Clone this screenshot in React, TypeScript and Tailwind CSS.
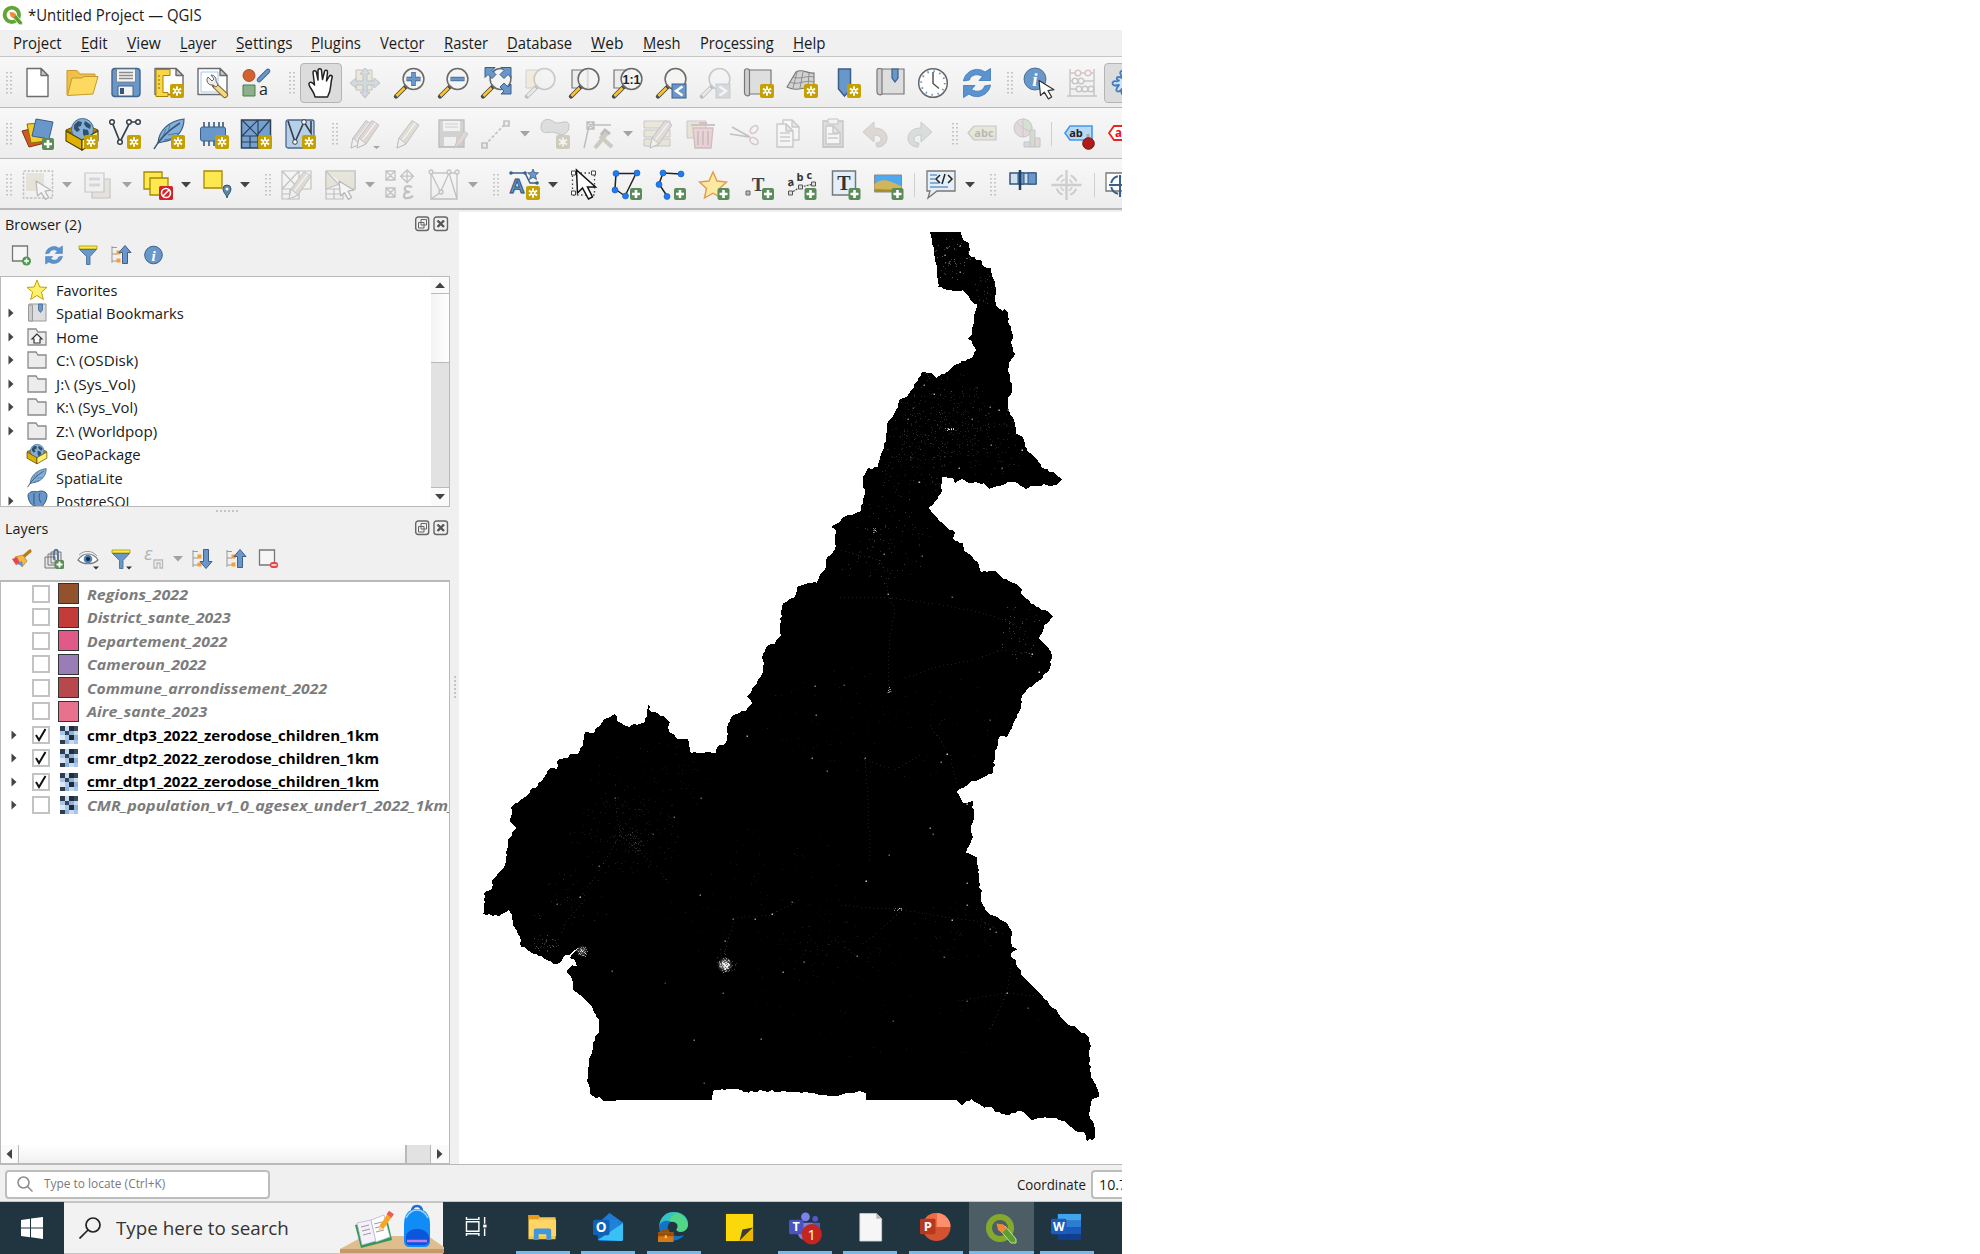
import React, { useLayoutEffect, useRef } from "react";

/* ---------- text squeezed to the metrics of the system UI font ---------- */
function Fit({ className = "", children }: { className?: string; children: React.ReactNode }) {
  const outer = useRef<HTMLSpanElement>(null);
  const inner = useRef<HTMLSpanElement>(null);
  useLayoutEffect(() => {
    const o = outer.current;
    const i = inner.current;
    if (o && i) {
      i.style.transform = "scaleX(" + o.clientWidth / i.offsetWidth + ")";
    }
  }, []);
  return (
    <span ref={outer} className={"inline-block shrink-0 whitespace-nowrap " + className}>
      <span ref={inner} className="inline-block origin-left">{children}</span>
    </span>
  );
}

/* ---------- icon primitives ---------- */
const B = "#6a97c9";
const BD = "#3a5f8a";

function Svg({ children, dim }: { children: React.ReactNode; dim?: boolean }) {
  return (
    <svg viewBox="0 0 32 32" className={"size-8 shrink-0 overflow-visible " + (dim ? "opacity-30" : "")}>
      {children}
    </svg>
  );
}
function Star({ x = 17, y = 17 }: { x?: number; y?: number }) {
  return (
    <g transform={`translate(${x} ${y})`}>
      <rect width="14" height="14" rx="2" fill="#c4a000" />
      <path d="M7 2.2V11.8M2.9 4.6L11.1 9.4M11.1 4.6L2.9 9.4" stroke="#fff" strokeWidth="1.8" />
      <circle cx="7" cy="7" r="1.1" fill="#c4a000" />
    </g>
  );
}
function Plus({ x = 19, y = 19, s = 1 }: { x?: number; y?: number; s?: number }) {
  return (
    <g transform={`translate(${x} ${y}) scale(${s})`}>
      <rect width="12" height="12" rx="2" fill="#5a8c5a" />
      <path d="M6 2V10M2 6H10" stroke="#fff" strokeWidth="2.6" />
    </g>
  );
}
function Lens({ dim }: { dim?: boolean }) {
  return (
    <g>
      <path d="M3 29.5L13 19.5" stroke="#4a4a4a" strokeWidth="4.4" strokeLinecap="round" />
      <path d="M3.4 29L11.5 21" stroke={dim ? "#ddd" : "#fcc52e"} strokeWidth="2.6" />
      <circle cx="20.5" cy="12" r="10.4" fill="#f4f4f2" fillOpacity=".88" stroke="#6a6a6a" strokeWidth="1.5" />
    </g>
  );
}
function Page({ x = 5, y = 1.5, w = 21, h = 28 }: { x?: number; y?: number; w?: number; h?: number }) {
  return (
    <g stroke="#6c6c6c" strokeWidth="1.4" strokeLinejoin="round">
      <path d={`M${x} ${y}h${w - 7}l7 7v${h - 7}h${-w}z`} fill="#fff" />
      <path d={`M${x + w - 7} ${y}v7h7z`} fill="#c9c9c9" />
    </g>
  );
}
function Arrow({ x = 0, y = 0 }: { x?: number; y?: number }) {
  return (
    <path transform={`translate(${x} ${y})`} d="M0 0L1.5 15L5.3 11.6L9.4 18.4L12.6 16.4L9 10.2L15 9.2Z" fill="#fff" stroke="#333" strokeWidth="1.2" strokeLinejoin="round" />
  );
}
function Globe() {
  return (
    <g>
      <path d="M0 12L16 5L32 12L16 21Z" fill="#b08a00" stroke="#6b5600" strokeWidth="1" />
      <circle cx="16.5" cy="11.5" r="11" fill="#86afd6" stroke="#456c96" strokeWidth="1" />
      <path d="M8 7l4-4 4 1-1 4-3 1 2 3-3 2-3-3zM19 3l6 4-1 4-4-2-2-3zM17 11l5 1 1 4-4 4-2-4z" fill="#31506e" />
      <path d="M0 13L16 22V32L0 23Z" fill="#e0b000" stroke="#4b3c00" strokeWidth="1.1" />
      <path d="M32 13L16 22V32L32 23Z" fill="#fdf266" stroke="#4b3c00" strokeWidth="1.1" />
    </g>
  );
}
function Refresh() {
  return (
    <g fill="#5a93cf" stroke="#3c76b4" strokeWidth=".8">
      <path d="M2.5 14C4 4 16-1 24 5L29.5 1.5V13.5H18L21.5 9.5C16 6 9.5 8 8.5 13Z" />
      <path d="M29.5 18C28 28 16 33 8 27L2.5 30.5V18.5H14L10.5 22.5C16 26 22.5 24 23.5 19Z" />
    </g>
  );
}
function Feather() {
  return (
    <g>
      <path d="M5 25C6 12 16 3 31 1C31 10 26 22 9 24Z" fill="#82b0dc" stroke="#3d5f80" strokeWidth="1.2" />
      <path d="M1 31C7 20 16 12 27 5" stroke="#3b5570" strokeWidth="1.5" fill="none" />
      <path d="M10 18l3-7M15 14l2-7M11 22l10-2M15 17l10-2" stroke="#4a7099" strokeWidth=".9" />
    </g>
  );
}
function Pencil({ x = 0, c = "#b6a88e" }: { x?: number; c?: string }) {
  return (
    <g transform={`translate(${x} 0)`}>
      <path d="M6 30L8 20L21 2.5L28 7L15 26Z" fill={c} stroke="#555" strokeWidth="1" />
      <path d="M6 30L8 20L15 26Z" fill="#eee" stroke="#555" strokeWidth="1" />
      <path d="M11.5 22L24.5 5" stroke="#eee" strokeWidth="1.4" />
    </g>
  );
}

const SQ = "M2 2h9v9h-9zM2 2l9 9M11 2l-9 9";
const SANS = "'Liberation Sans', sans-serif";

const icons: Record<string, React.ReactNode> = {
  blank: <Page />,
  open: (
    <g stroke="#c59a2c" strokeWidth="1">
      <path d="M1 28V3.5h10l3 3.5h15v6z" fill="#eec04a" />
      <path d="M1.5 28.5L6 11h10l2-1.5h14L27 27z" fill="#fdd95f" />
    </g>
  ),
  save: (
    <g>
      <rect x="2" y="1.5" width="28" height="28" rx="3" fill={B} stroke="#40658f" strokeWidth="1.4" />
      <path d="M6.5 2h19v13h-19z" fill="#f3f3f3" stroke="#777" strokeWidth=".8" />
      <path d="M9 5.5h14M9 8.5h14M9 11.5h14" stroke="#8b8b8b" strokeWidth="1.3" />
      <path d="M8 19h15v10H8z" fill="#f3f3f3" stroke="#40658f" />
      <path d="M10 21h4v6h-4z" fill="#34567e" />
    </g>
  ),
  layout: (
    <g>
      <Page x={2} w={28} h={26} />
      <path d="M3 2.5h14v6H10v17h5v4H3z" fill="#f8d648" stroke="#a98200" strokeWidth="1" />
      <path d="M5 9h2M5 13h2M5 17h2M5 21h2" stroke="#8a6a00" />
      <Star />
    </g>
  ),
  props: (
    <g>
      <Page x={1} w={29} h={26} />
      <path d="M4 5h17v20H4z" fill="none" stroke="#9ac1ee" strokeWidth=".9" />
      <path d="M18 18.500L28 28" stroke="#7a6a30" strokeWidth="6" strokeLinecap="round" />
      <path d="M19 19.500L28 28" stroke="#f3d985" strokeWidth="4" strokeLinecap="round" />
      <path d="M11 10a5 5 0 0 0 5 8l3 2 2-2-2-4a5 5 0 0 0-5-6l3 4-2 2z" fill="#eee" stroke="#666" strokeWidth="1" />
    </g>
  ),
  style: (
    <g>
      <circle cx="8" cy="8.500" r="6" fill="#d4622c" stroke="#8f3e1c" strokeWidth=".8" />
      <path d="M18 13L27 4" stroke="#3a6190" strokeWidth="4.600" strokeLinecap="round" />
      <path d="M18 13L27 4" stroke={B} strokeWidth="3" strokeLinecap="round" />
      <path d="M2 18h12v11H2z" fill="#8bb08b" stroke="#4d7a4d" />
      <text x="18" y="28" fontSize="16" fontFamily="Open Sans, sans-serif" fill="#222">a</text>
    </g>
  ),
  hand: (
    <path
      d="M10 30C9 24 3 19 4 16.500C5 14 8 16 9.500 18L8 5.500C8 3 11 3 11.500 5.500L13 13V3.500C13 1 16.500 1 16.500 3.500L17.500 12.500L19.500 4.500C20 2.500 23 3 22.500 5.500L21.500 14L24 9.500C25 7.500 28 8.500 27 11C25 17 27 22 22.500 30Z"
      fill="#fff" stroke="#222" strokeWidth="1.500" strokeLinejoin="round"
    />
  ),
  pansel: (
    <g stroke="#555" strokeWidth="1">
      <path d="M7 3h16v20H7z" fill="#d8cfa8" />
      <path d="M16 1l5 6h-3v7h7v-3l6 5-6 5v-3h-7v7h3l-5 6-5-6h3v-7H7v3l-6-5 6-5v3h7V7h-3z" fill="#8aa0b5" />
    </g>
  ),
  zin: <g><Lens /><path d="M20.500 5v14M13.500 12h14" stroke={BD} strokeWidth="4.400" /><path d="M20.500 5.500v13M14 12h13" stroke={B} strokeWidth="3" /></g>,
  zout: <g><Lens /><path d="M13.500 12h14" stroke={BD} strokeWidth="4.400" /><path d="M14 12h13" stroke={B} strokeWidth="3" /></g>,
  zfull: (
    <g>
      <Lens />
      <g fill={B} stroke={BD} strokeWidth="1">
        <path d="M5 .500h10l-3 3 4 4-4 4-4-4-3 3z" />
        <path d="M31 .500H21l3 3-4 4 4 4 4-4 3 3z" />
        <path d="M31 27H21l3-3-4-4 4-4 4 4 3-3z" />
      </g>
    </g>
  ),
  zsel: <g><path d="M2 3h15v18H2z" fill="#ead9a0" stroke="#888" /><Lens dim /></g>,
  zlayer: <g><path d="M4 3h15v18H4z" fill="#ececec" stroke="#777" strokeWidth="1.200" /><Lens /><path d="M20 3v18" stroke="#ccc" /></g>,
  z11: (
    <g>
      <path d="M3 3h15v18H3z" fill="#ececec" stroke="#777" strokeWidth="1.200" /><Lens />
      <text x="20.500" y="16.500" textAnchor="middle" fontSize="12.500" fontWeight="bold" fontFamily={SANS} fill="#222">1:1</text>
    </g>
  ),
  zlast: <g><Lens /><rect x="17" y="17" width="14" height="14" fill={B} stroke={BD} /><path d="M27.500 19.500L21 24l6.500 4.500" stroke="#fff" strokeWidth="2.400" fill="none" /></g>,
  znext: <g><Lens dim /><rect x="17" y="17" width="14" height="14" fill="#8fa3b5" stroke="#777" /><path d="M20.500 19.500L27 24l-6.500 4.500" stroke="#fff" strokeWidth="2.400" fill="none" /></g>,
  newmap: (
    <g stroke="#777" strokeWidth="1.200">
      <path d="M4 3h25v24H4z" fill="#dedede" /><path d="M2.500 4c0-3 5-3 5 0v24c-2 2-5 0-5-2z" fill="#cfcfcf" /><g stroke="none"><Star x={18} /></g>
    </g>
  ),
  map3d: (
    <g>
      <path d="M1 20L10 5c6-4 12 2 18 1v15c-9-3-15 5-27-1z" fill="#d2d2d2" stroke="#777" strokeWidth="1.100" />
      <path d="M4 15c8 4 15-3 24 0M7 10c8 3 13-2 21 0M11 5l-4 16M17 5l-3 16M23 6l-1 14" stroke="#888" fill="none" strokeWidth=".9" />
      <Star x={18} />
    </g>
  ),
  newbm: <g><path d="M8.500 2h12v20l-6 7-6-7z" fill={B} stroke={BD} strokeWidth="1.500" /><Star x={17} /></g>,
  bm: (
    <g stroke="#777" strokeWidth="1.200">
      <path d="M4 2h26v25H4z" fill="#dedede" /><path d="M3 3c0-2 5-2 5 0v24c-2 2-5 0-5-2z" fill="#cfcfcf" />
      <path d="M18 2h6v9l-3 4-3-4z" fill={B} stroke={BD} />
    </g>
  ),
  clock: (
    <g>
      <circle cx="16" cy="16" r="14.300" fill="#fff" stroke="#666" strokeWidth="1.500" />
      <circle cx="16" cy="16" r="11.800" fill="none" stroke={B} strokeWidth="2" strokeDasharray="1.500 4.680" />
      <path d="M16 5v11.500l6 5" stroke="#555" strokeWidth="1.500" fill="none" />
    </g>
  ),
  refresh: <Refresh />,
  info: (
    <g>
      <circle cx="12" cy="12" r="11" fill={B} stroke={BD} strokeWidth=".8" />
      <text x="12" y="19" textAnchor="middle" fontSize="19" fontWeight="bold" fontStyle="italic" fontFamily="Liberation Serif, serif" fill="#fff">i</text>
      <Arrow x={16} y={13.500} />
    </g>
  ),
  abacus: (
    <g fill="none" stroke="#666" strokeWidth="1.500">
      <path d="M4 2v27M28 2v27M1 29h30M4 6h24M4 14h24M4 22h24" />
      <g fill="#fff"><circle cx="12" cy="6" r="2.800" stroke="#a55" /><circle cx="22" cy="6" r="2.800" stroke="#a55" /><circle cx="9" cy="14" r="2.800" /><circle cx="15" cy="14" r="2.800" /><circle cx="13" cy="22" r="2.800" /><circle cx="19" cy="22" r="2.800" /><circle cx="25" cy="22" r="2.800" /></g>
    </g>
  ),
  gear: (
    <path
      d="M15 5C12 2 9 5 11 8L12 11L9 10C6 10 6 13 9 13.500L7 14.500C2 13 1 18 5 18.500L9 18L7 21C5 24 8 26 11 23L12 22C10 26 13 30 16 27L18 24V6z"
      transform="translate(1 0)" fill="#cfe2f7" stroke="#3f7cc4" strokeWidth="1.800" strokeLinejoin="round"
    />
  ),
  addlayer: (
    <g strokeWidth="1">
      <path d="M0 13L17 9l6 16L7 29z" fill="#cf5a28" stroke="#7d3210" />
      <path d="M5 6l17-1 2 18-15 2z" fill="#f4ce28" stroke="#8b6d00" />
      <path d="M14 1l17 3-4 17-17-3z" fill={B} stroke={BD} />
      <Plus x={20} y={20} />
    </g>
  ),
  gpkg: <g><Globe /><Star x={18} /></g>,
  vshape: (
    <g>
      <path d="M3 4L11 24L21 4H29" fill="none" stroke="#333f4b" strokeWidth="1.700" />
      <g fill="#fff" stroke="#333f4b" strokeWidth="1.500"><circle cx="3" cy="4" r="2.300" /><circle cx="11" cy="24" r="2.300" /><circle cx="20" cy="4" r="2.300" /><circle cx="29" cy="4" r="2.300" /></g>
      <Star x={18} />
    </g>
  ),
  feather: <g><Feather /><Star x={18} /></g>,
  chip: (
    <g>
      <path d="M7 4v24M12 4v24M17 4v24M22 4v24M26 4v12" stroke="#48698d" strokeWidth="1.800" />
      <rect x="3.500" y="9" width="25" height="14" rx="2" fill={B} stroke={BD} /><Star x={18} />
    </g>
  ),
  mesh: (
    <g>
      <path d="M1.500 2h29v28h-29z" fill="#74a0cf" stroke="#2c4058" strokeWidth="1.500" />
      <path d="M1.500 18h29M18 2v28M2 2l16 16M18 2L2 18M30 2L18 16M10 18v12M2 24h16" stroke="#2c4058" strokeWidth="1.200" /><Star x={18} />
    </g>
  ),
  gps: (
    <g>
      <rect x="2" y="2" width="28" height="28" rx="2" fill="#b8cfe8" stroke="#47688e" strokeWidth="1.300" />
      <path d="M4 3L11 24L20 4L27 15V3" fill="none" stroke="#333f4b" strokeWidth="1.600" />
      <circle cx="11" cy="24" r="2.300" fill="#fff" stroke="#333f4b" /><circle cx="20" cy="4" r="2.300" fill="#fff" stroke="#333f4b" /><Star x={18} />
    </g>
  ),
  pencils: <g><Pencil x={-4} c="#b4948e" /><Pencil x={2} c="#b4948e" /><path d="M24 28h7l-3.500 3z" fill="#000" /></g>,
  pencil: <Pencil x={-1} />,
  savedit: (
    <g>
      <path d="M3 2h25v27H3z" fill="#888" stroke="#444" strokeWidth="1.300" /><path d="M7 3h17v10H7z" fill="#eee" /><path d="M9 6h13M9 9h13" stroke="#777" />
      <path d="M8 19h12v9H8z" fill="#eee" /><path d="M18 30l3-7 7-10 4 3-7 10z" fill="#b9998f" stroke="#666" />
    </g>
  ),
  line: <g stroke="#555" strokeWidth="1.700" fill="none"><path d="M5 27L26 5" strokeDasharray="3 2" /><path d="M2 25h5v5H2zM24 3h5v5h-5z" fill="#ddd" /></g>,
  blob: <g><path d="M2 9C2 0 11 0 15 4S30-1 30 8s-8 10-13 7-15 4-15-6z" fill="#a9b0ac" stroke="#555" /><rect x="17" y="17" width="14" height="14" rx="2" fill="#857840" /><path d="M24 19.500v9M20 21.500l8 5M28 21.500l-8 5" stroke="#fff" strokeWidth="1.700" /></g>,
  vertex: <g stroke="#444" strokeWidth="1.400" fill="none"><path d="M1 30L6 8M9 7h19" /><path d="M4 4h7v7H4zM4 4l7 7M11 4l-7 7" /><path d="M12 30L25 14M17 18L29 29" strokeWidth="4" stroke="#7c7458" /><path d="M18 17l4-5 5 4" strokeWidth="3" /></g>,
  attrs: <g><path d="M2 3h26v7H2zM2 12h26v7H2zM2 21h26v7H2z" fill="#d0cba0" stroke="#666" /><Pencil x={2} c="#b4a49a" /></g>,
  trash: <g><path d="M1 3h19v17H1z" fill="#c9c098" stroke="#666" /><path d="M7 10h20l-2 20H9z" fill="#cf8e94" stroke="#8c4a52" strokeWidth="1.400" /><path d="M5 7h24M12 13v14M17 13v14M22 13v14M13 5h8" stroke="#8c4a52" strokeWidth="2" /></g>,
  scissors: <g fill="none" stroke="#555" strokeWidth="1.600"><path d="M1 16l19 3M3 9l18 10" /><ellipse cx="25" cy="11.500" rx="4.500" ry="3" transform="rotate(-45 25 11.500)" stroke="#a06868" /><ellipse cx="25" cy="23" rx="4.500" ry="3" transform="rotate(35 25 23)" stroke="#a06868" /></g>,
  copy: <g transform="translate(-1 0)"><Page x={11} y={2} w={16} h={20} /><Page x={5} y={6} w={16} h={23} /><path d="M8 15h10M8 19h10M8 23h10" stroke="#777" strokeWidth="1.500" /></g>,
  paste: <g><path d="M6 3h20v26H6z" fill="#b9ae9c" stroke="#555" strokeWidth="1.300" /><path d="M11 1h10v5H11z" fill="#eee" stroke="#555" /><Page x={9} y={8} w={14} h={18} /><path d="M11 16h10M11 20h10" stroke="#777" strokeWidth="1.500" /></g>,
  undo: <path d="M3 14L14 4v6c9 0 13 5 13 10s-4 9-10 9l-1-4c7 0 7-8-2-8v7z" fill="#b49a90" stroke="#776" strokeWidth="1" />,
  redo: <path d="M28 14L17 4v6C8 10 4 15 4 20s4 9 10 9l1-4c-7 0-7-8 2-8v7z" fill="#a0b0a4" stroke="#677" strokeWidth="1" />,
  abc: <g><path d="M2 15l6-7h22v14H8z" fill="#c9c9a0" stroke="#666" strokeWidth="1.200" /><text x="18" y="19" textAnchor="middle" fontSize="11" fontWeight="bold" fontFamily="Open Sans, sans-serif" fill="#333">abc</text></g>,
  diag: <g stroke="#666" strokeWidth="1" transform="translate(2 0)"><circle cx="12" cy="10" r="9" fill="#b9a0a0" /><path d="M12 10V1a9 9 0 0 1 8 13z" fill="#90b090" /><path d="M12 10L5 4M12 10v9" /><path d="M19 12h5v17h-5z" fill="#8ab08a" /><path d="M24 20h5v9h-5z" fill="#c0a0a0" /><path d="M13 24h6v5h-6z" fill="#a0a0c0" /></g>,
  abpin: (
    <g>
      <path d="M3 15l5-7h22v14H8z" fill="#b9d9f8" stroke="#4796ea" strokeWidth="1.600" />
      <text x="14" y="19" textAnchor="middle" fontSize="11" fontWeight="bold" fontFamily="Open Sans, sans-serif" fill="#222">ab</text>
      <path d="M26 24v-8" stroke="#aaa" strokeWidth="3" /><circle cx="26.500" cy="25.500" r="5.800" fill="#b01c1c" stroke="#7c0e0e" />
    </g>
  ),
  abred: (
    <g transform="translate(1 0)">
      <path d="M2 15l5-7h24v14H7z" fill="#fff" stroke="#ee2222" strokeWidth="1.800" />
      <text x="15" y="19" textAnchor="middle" fontSize="11.500" fontWeight="bold" fontFamily="Open Sans, sans-serif" fill="#e11">ab</text>
    </g>
  ),
  select: <g><path d="M1.500 2h29v27h-29z" fill="none" stroke="#555" strokeWidth="1.500" strokeDasharray="2.500 1.500" /><path d="M4 4h18v18H4z" fill="#c8bfa0" /><Arrow x={14} y={12} /></g>,
  forms: <g stroke="#666" strokeWidth="1.200"><path d="M11 10h18v19H11z" fill="#c9c4a8" /><path d="M4 4h19v19H4z" fill="#eee" /><path d="M8 10h11M8 16h11" strokeWidth="3" stroke="#999" /></g>,
  desel: (
    <g transform="translate(2 0)">
      <path d="M2 3h18v17H2z" fill="#fce94f" stroke="#a58800" strokeWidth="1.300" /><path d="M8 9h18v17H8z" fill="#fce94f" stroke="#a58800" strokeWidth="1.300" />
      <rect x="17" y="17" width="14" height="14" rx="1.500" fill="#d3232a" /><circle cx="24" cy="24" r="4.500" fill="none" stroke="#fff" strokeWidth="1.600" /><path d="M21 27l6-6" stroke="#fff" strokeWidth="1.600" />
    </g>
  ),
  selloc: (
    <g transform="translate(1 0)">
      <path d="M3 2h18v17H3z" fill="#fce94f" stroke="#a58800" strokeWidth="1.300" />
      <path d="M26 29c0-3-4-5-4-9a4 4 0 0 1 8 0c0 4-4 6-4 9z" fill="#5a86a8" stroke="#34566f" /><circle cx="26" cy="20" r="1.500" fill="#fff" />
    </g>
  ),
  editgrid: <g stroke="#555" strokeWidth="1.200" fill="none"><path d="M1 2h29v18H18v10H1zM1 20h17M1 2l17 18M18 2L1 20M18 2v18M9 20v10M1 25h17" /><Pencil x={2} c="#b4a090" /></g>,
  selgrid: <g stroke="#555" strokeWidth="1.200" fill="none"><path d="M1 2h29v18H18v10H1zM1 20h17M9 20v10M1 25h17" /><path d="M1 2h29v18H18L1 2M1 2v18l16-6" fill="#c9c4a0" /><Arrow x={14} y={12} /></g>,
  gridc: <g stroke="#555" strokeWidth="1.300" fill="none"><path d={SQ} /><path d={SQ} transform="translate(0 17)" /><path d={SQ} transform="translate(23 -2) rotate(45)" /><path d="M28 18c-6-2-8 0-7 3 1 2 3 2 5 2-3 0-6 0-6 4 0 3 5 3 9 0" strokeWidth="2.200" /></g>,
  gridv: <g stroke="#555" strokeWidth="1.300" fill="none"><path d="M3 4h26v26H3zM3 4l10 20M21 4l-8 18M21 4l8 26M13 23L3 30" /><g fill="#ddd"><circle cx="3" cy="3" r="2" /><circle cx="21" cy="3" r="2" /><circle cx="29" cy="3" r="2" /><circle cx="13" cy="23" r="2" /></g></g>,
  anno: (
    <g>
      <path d="M4 4h14l5 10h7" stroke={BD} strokeWidth="1.500" fill="none" /><circle cx="4" cy="4" r="1.800" fill={BD} /><circle cx="18" cy="4" r="1.800" fill={BD} /><circle cx="30" cy="14" r="1.800" fill={BD} />
      <text x="10" y="24" textAnchor="middle" fontSize="21" fontWeight="bold" fontFamily={SANS} fill={B} stroke="#2e5077" strokeWidth="1">A</text>
      <path d="M26 0l1.500 3.500 4 .300-3 2.700 1 4-3.500-2.200-3.500 2.200 1-4-3-2.700 4-.300z" fill={B} stroke="#2e5077" strokeWidth=".7" /><Star x={19} y={17} />
    </g>
  ),
  annosel: (
    <g transform="translate(2.500 0)">
      <path d="M4 4h22v22H4z" fill="none" stroke="#444" strokeWidth="1.300" strokeDasharray="1.500 2.500" />
      <path d="M3 2h4v4H3zM23 2h4v4h-4zM3 22h4v4H3z" fill="#fff" stroke="#444" />
      <path d="M8 1L9 24l5-5 6 11 4-2-5-10h8z" fill="#fff" stroke="#111" strokeWidth="1.500" />
    </g>
  ),
  apoly: <g><path d="M6 4.500h20L15 27 5 20z" fill="none" stroke="#222" strokeWidth="1.500" /><g fill="#1f7cf5" stroke="#1455b0" strokeWidth=".6"><circle cx="6" cy="4.500" r="3" /><circle cx="27" cy="4" r="3" /><circle cx="5" cy="21" r="3" /><circle cx="15.500" cy="27" r="3" /></g><Plus x={20} y={19} /></g>,
  aline: <g><path d="M27 5L9 4L5 15l8 12" fill="none" stroke="#222" strokeWidth="1.500" /><g fill="#1f7cf5" stroke="#1455b0" strokeWidth=".6"><circle cx="9" cy="4" r="3" /><circle cx="27" cy="5" r="3" /><circle cx="5" cy="15.500" r="3" /><circle cx="13" cy="27.500" r="3" /></g><Plus x={20} y={19} /></g>,
  astar: <g transform="translate(1.500 0)"><path d="M14.500 3l4 9 9.500 1-7 6.500 2 9.500-8.500-4.800L6 29l2-9.500L1 13l9.500-1z" fill="#fdeaa2" stroke="#e39a48" strokeWidth="1.400" /><Plus x={19} y={19} /></g>,
  atext: <g transform="translate(2 0)"><text x="15" y="22" textAnchor="middle" fontSize="19" fontWeight="bold" fontFamily="Liberation Serif, serif" fill="#444">T</text><path d="M3 22h4v4H3z" fill="#bbb" stroke="#666" /><Plus x={19} y={19} /></g>,
  acurve: (
    <g transform="translate(1.500 0)">
      <path d="M4 24L14 18L27 15" stroke="#555" strokeWidth="1.200" strokeDasharray="2 1" fill="none" /><path d="M2 22h4v4H2zM12 16h4v4h-4zM25 13h4v4h-4z" fill="#ddd" stroke="#555" />
      <g fontSize="11" fontWeight="bold" fontFamily="Open Sans, sans-serif" fill="#333"><text x="1" y="17" transform="rotate(-10 4 14)">a</text><text x="10" y="12">b</text><text x="20" y="10">c</text></g>
      <Plus x={18} y={19} />
    </g>
  ),
  abox: <g transform="translate(1.500 0)"><path d="M3 2h23v24H3z" fill="#e3eef8" stroke="#777" strokeWidth="1.500" /><text x="14.500" y="21" textAnchor="middle" fontSize="20" fontWeight="bold" fontFamily="Liberation Serif, serif" fill="#333">T</text><Plus x={19} y={19} /></g>,
  apic: <g transform="translate(1.500 0)"><path d="M1 6h27v17H1z" fill="#4fa9ee" stroke="#888" /><path d="M1 15c9-7 14-3 27 2v6H1z" fill="#d2b45a" /><path d="M1 20l27 1v2H1z" fill="#a58e2d" /><Plus x={18} y={19} /></g>,
  code: <g transform="translate(-1 0)"><path d="M3 2h28v20H13L4 29l2-7H3z" fill="#e5eff8" stroke="#777" strokeWidth="1.300" /><path d="M6 6h7M6 10h5M6 14h9M6 18h18" stroke={B} strokeWidth="1.700" /><path d="M16 6l-4 4 4 4M24 6l4 4-4 4M21 5l-3 10" stroke="#222" strokeWidth="1.500" fill="none" /></g>,
  ruler: <g><path d="M2 4h26v11H2z" fill="#cfe0f0" stroke="#34577f" strokeWidth="1.500" /><path d="M10 4h6v11h-6zM20 4h8v11h-8z" fill={B} stroke="#34577f" /><path d="M12 1v20" stroke="#23405f" strokeWidth="2.500" /></g>,
  cross: <g stroke="#7c7c7c" fill="none" strokeWidth="2" transform="translate(-1.500 0)"><path d="M16 1v30M1 16h30" strokeWidth="2.400" /><circle cx="16" cy="16" r="10.500" strokeDasharray="8.500 8" strokeDashoffset="-4" /><circle cx="16" cy="16" r="6" strokeWidth="1.500" strokeDasharray="4.700 4.700" strokeDashoffset="-2.300" /></g>,
  crossmap: <g fill="none"><path d="M2 4h28v18H2z" fill="#fff" stroke="#777" strokeWidth="1.300" /><path d="M16 6v22M5 16h26" stroke={BD} strokeWidth="2" /><circle cx="16" cy="16" r="9" stroke={BD} strokeWidth="2" strokeDasharray="10 4" strokeDashoffset="-2" /></g>,
};

/* ---------- toolbars ---------- */
function Slots({ names, dim }: { names: string[]; dim?: boolean }) {
  return (
    <>
      {names.map((n) => (
        <div key={n} className="flex w-[43.7px] shrink-0 justify-center">
          <Svg dim={dim}>{icons[n]}</Svg>
        </div>
      ))}
    </>
  );
}
function Drop({ dim }: { dim?: boolean }) {
  return (
    <div className="flex w-[15.6px] shrink-0 justify-center">
      <svg viewBox="0 0 10 6" className={"h-1.5 w-2.5 " + (dim ? "opacity-45" : "")}><path d="M0 0h10L5 5.500z" fill="#444" /></svg>
    </div>
  );
}
function Grip({ className }: { className: string }) {
  return (
    <div className={"flex shrink-0 " + className}>
      <svg viewBox="0 0 6 24" className="h-6 w-1.5">
        <path d="M1 1V24M5 1V24" stroke="#b5b5b5" strokeWidth="1.500" strokeDasharray="1.500 2.500" />
      </svg>
    </div>
  );
}
function Sep({ className }: { className: string }) {
  return <div className={"h-6 w-px shrink-0 bg-[#cfcfcf] " + className} />;
}

function Toolbars() {
  return (
    <>
      <div className="flex h-[51px] w-full shrink-0 items-center overflow-hidden border-b border-[#b8b8b8] bg-linear-to-b from-[#f8f8f8] to-[#ededed] pt-0.5">
        <Grip className="w-[16.500px] pl-1.5" />
        <Slots names={["blank", "open", "save", "layout", "props", "style"]} />
        <Grip className="w-[22.800px] pl-2.5" />
        <div className="-ml-px mr-px flex h-10 w-[42px] shrink-0 items-center justify-center rounded border border-[#b4b4b4] bg-[#dcdcdc]"><Svg>{icons.hand}</Svg></div>
        <Slots names={["pansel"]} dim />
        <Slots names={["zin", "zout", "zfull"]} />
        <Slots names={["zsel"]} dim />
        <Slots names={["zlayer", "z11", "zlast"]} />
        <Slots names={["znext"]} dim />
        <Slots names={["newmap", "map3d", "newbm", "bm", "clock", "refresh"]} />
        <Grip className="w-[18px] pl-2" />
        <Slots names={["info"]} />
        <Slots names={["abacus"]} dim />
        <div className="flex h-10 w-[42px] shrink-0 items-center justify-center rounded border border-[#b4b4b4] bg-[#dcdcdc]"><Svg>{icons.gear}</Svg></div>
      </div>
      <div className="flex h-[51px] w-full shrink-0 items-center overflow-hidden border-b border-[#b8b8b8] bg-linear-to-b from-[#f8f8f8] to-[#ededed] pt-0.5">
        <Grip className="w-4 pl-1.5" />
        <Slots names={["addlayer", "gpkg", "vshape", "feather", "chip", "mesh", "gps"]} />
        <Grip className="w-[21px] pl-2.5" />
        <Slots names={["pencils", "pencil", "savedit", "line"]} dim />
        <Drop dim />
        <Slots names={["blob", "vertex"]} dim />
        <Drop dim />
        <Slots names={["attrs", "trash", "scissors", "copy", "paste", "undo", "redo"]} dim />
        <Grip className="w-[18px] pl-2.5" />
        <Slots names={["abc", "diag"]} dim />
        <Sep className="ml-1 mr-1" />
        <Slots names={["abpin", "abred"]} />
      </div>
      <div className="flex h-[51px] w-full shrink-0 items-center overflow-hidden border-b-2 border-[#b8b8b8] bg-linear-to-b from-[#f8f8f8] to-[#ededed] pt-[3px]">
        <Grip className="w-4 pl-1.5" />
        <Slots names={["select"]} dim /><Drop dim />
        <Slots names={["forms"]} dim /><Drop dim />
        <Slots names={["desel"]} /><Drop />
        <Slots names={["selloc"]} /><Drop />
        <Grip className="w-[22px] pl-3" />
        <Slots names={["editgrid", "selgrid"]} dim /><Drop dim />
        <Slots names={["gridc", "gridv"]} dim /><Drop dim />
        <Grip className="w-[20px] pl-3" />
        <Slots names={["anno"]} /><Drop />
        <Slots names={["annosel", "apoly", "aline", "astar", "atext", "acurve", "abox", "apic"]} />
        <Sep className="ml-1 mr-1" />
        <Slots names={["code"]} /><Drop />
        <Grip className="w-6 pl-3" />
        <Slots names={["ruler"]} />
        <Slots names={["cross"]} dim />
        <Sep className="mx-1" />
        <Slots names={["crossmap"]} />
      </div>
    </>
  );
}

/* ---------- docks ---------- */
function DockTitle({ title, className }: { title: string; className: string }) {
  return (
    <div className="flex h-[30px] shrink-0 items-center pb-0.5 pl-[5px] text-[15px]">
      <Fit className={className}>{title}</Fit>
      <svg viewBox="0 0 34 16" className="ml-auto mr-px h-4 w-[34px]" fill="none" stroke="#666">
        <rect x=".7" y="1" width="13" height="13.500" rx="2.500" strokeWidth="1.400" />
        <path d="M6 3.500h5.500V9H6zM3.500 6.500H9V12H3.500z" fill="#f0f0f0" />
        <rect x="19" y="1" width="13.500" height="13.500" rx="2.500" strokeWidth="1.400" />
        <path d="M22.500 4.500l6.500 6.500M29 4.500l-6.500 6.500" strokeWidth="2.400" stroke="#555" />
      </svg>
    </div>
  );
}
function Mini({ children, className = "" }: { children: React.ReactNode; className?: string }) {
  return <svg viewBox="0 0 20 20" className={"size-5 shrink-0 overflow-visible " + className}>{children}</svg>;
}
const Funnel = <g><path d="M1 1h18v3H1z" fill="#fce94f" stroke="#a59500" strokeWidth=".8" /><path d="M1.500 4.500h17l-6.500 7v8h-3.500v-8z" fill={B} stroke="#4a6f99" strokeWidth=".9" /></g>;
const Tree = <g><path d="M1 1v17M1 2.500h5M1 9h5M1 16h5" stroke="#999" fill="none" /><path d="M5.500 5.500h4v4h-4zM5.500 13.500h4v4h-4z" fill="#ff9c2e" /></g>;
const UpArrow = <path d="M14 .500l6 7h-3.500v11h-5v-11H8z" fill={B} stroke="#3d5f8a" />;
const DownArrow = <path d="M14 19.500l6-7h-3.500v-12h-5v12H8z" fill={B} stroke="#3d5f8a" />;
const Folder = <path d="M1 2h8l2 3h8v13H1z" fill="#ececec" stroke="#8a8a8a" strokeWidth="1.300" />;

const treeIcons: Record<string, React.ReactNode> = {
  star: <path d="M10 0l2.800 7 7.200.400-5.600 4.700 2 7.400-6.400-4-6.400 4 2-7.400L0 7.400 7.200 7z" fill="#fdf06a" stroke="#c9a000" strokeWidth="1" />,
  book: <g><path d="M2 1h17v17H2z" fill="#dedede" stroke="#999" /><path d="M1.500 2h4v16h-4z" fill="#ccc" stroke="#999" /><path d="M11.500 1h4v6l-2 2.500-2-2.500z" fill={B} stroke={BD} strokeWidth=".7" /></g>,
  home: <g>{Folder}<path d="M10 7l-5 5h2v4h6v-4h2z" fill="#fff" stroke="#333" strokeWidth="1.200" /></g>,
  folder: Folder,
  gpkg: <g transform="scale(.62)"><Globe /></g>,
  feather: <g transform="scale(.62)"><Feather /></g>,
  pg: <g><path d="M1 4C2 0 8 0 10 1C14-1 20 0 20 5C20 10 16 14 15 16H12V20H8V14C5 16 1 10 1 4Z" fill={B} stroke="#33597f" /><path d="M7 2v11M13 2c-2 4 0 8 1 10" stroke="#33597f" fill="none" /></g>,
};
const tree = [
  { t: "Favorites", i: "star", w: "w-[61px]", leaf: true },
  { t: "Spatial Bookmarks", i: "book", w: "w-[128px]" },
  { t: "Home", i: "home", w: "w-[42px]" },
  { t: "C:\\ (OSDisk)", i: "folder", w: "w-[82px]" },
  { t: "J:\\ (Sys_Vol)", i: "folder", w: "w-[79px]" },
  { t: "K:\\ (Sys_Vol)", i: "folder", w: "w-[82px]" },
  { t: "Z:\\ (Worldpop)", i: "folder", w: "w-[101px]" },
  { t: "GeoPackage", i: "gpkg", w: "w-[85px]", leaf: true },
  { t: "SpatiaLite", i: "feather", w: "w-[67px]", leaf: true },
  { t: "PostgreSQL", i: "pg", w: "w-[77px]" },
];
function Expander({ hidden }: { hidden?: boolean }) {
  return <svg viewBox="0 0 6 10" className={"h-2.5 w-1.5 shrink-0 " + (hidden ? "invisible" : "")}><path d="M.500 .500L5.500 5L.500 9.500z" fill="#444" /></svg>;
}
function Tri({ d }: { d: string }) {
  return <svg viewBox="0 0 10 10" className="size-2.5"><path d={d} fill="#444" /></svg>;
}

const layers = [
  { t: "Regions_2022", w: "w-[101px]", c: "bg-[#91522d]" },
  { t: "District_sante_2023", w: "w-[144px]", c: "bg-[#c43c39]" },
  { t: "Departement_2022", w: "w-[140px]", c: "bg-[#e15989]" },
  { t: "Cameroun_2022", w: "w-[119px]", c: "bg-[#987db7]" },
  { t: "Commune_arrondissement_2022", w: "w-[240px]", c: "bg-[#b7484b]" },
  { t: "Aire_sante_2023", w: "w-[120px]", c: "bg-[#e8718d]" },
  { t: "cmr_dtp3_2022_zerodose_children_1km", w: "w-[292px]", on: true },
  { t: "cmr_dtp2_2022_zerodose_children_1km", w: "w-[292px]", on: true },
  { t: "cmr_dtp1_2022_zerodose_children_1km", w: "w-[292px] border-b-[1.500px] border-black leading-[18px]", on: true },
  { t: "CMR_population_v1_0_agesex_under1_2022_1km_", w: "w-[367px]" },
];
const rasterCells = ["#2c3e50", "#c9daea", "#1f2d3d", "#35485c", "#a9c6e6", "#33475e", "#8fb2d8", "#c9daea", "#dbe7f3", "#a9c6e6", "#1c2a3a", "#8fb2d8", "#2c3e50", "#8fb2d8", "#c9daea", "#a9c6e6"];

function LeftDock() {
  return (
    <div className="flex w-[450px] shrink-0 flex-col">
      <DockTitle title="Browser (2)" className="w-[77px]" />
      <div className="flex h-9 shrink-0 items-center gap-[13.300px] pb-1.5 pl-[11px]">
        <Mini><path d="M1.500 1h15v15h-15z" fill="#f6f6f6" stroke="#777" strokeWidth="1.300" /><circle cx="15.500" cy="16" r="4.500" fill="#4e9a4e" /><path d="M15.500 13.500v5M13 16h5" stroke="#fff" strokeWidth="1.500" /></Mini>
        <Mini><g transform="scale(.625)"><Refresh /></g></Mini>
        <Mini>{Funnel}</Mini>
        <Mini>{Tree}{UpArrow}</Mini>
        <Mini><circle cx="9.500" cy="10" r="8.800" fill={B} stroke={BD} /><text x="9.500" y="15.500" textAnchor="middle" fontSize="15" fontWeight="bold" fontStyle="italic" fontFamily="Liberation Serif, serif" fill="#fff">i</text></Mini>
      </div>
      <div className="flex h-[231px] shrink-0 overflow-hidden border border-[#b9b9b9] bg-white">
        <div className="grow pt-px">
          {tree.map((r) => (
            <div key={r.t} className="flex h-[23.500px] items-center pl-[7px]">
              <Expander hidden={r.leaf} />
              <Mini className="ml-[13px]">{treeIcons[r.i]}</Mini>
              <Fit className={"ml-[9px] text-[15px] " + r.w}>{r.t}</Fit>
            </div>
          ))}
        </div>
        <div className="flex w-[18px] shrink-0 flex-col bg-[#e2e2e2]">
          <div className="flex h-[17px] items-center justify-center border-b border-[#b9b9b9] bg-[#fafafa]"><Tri d="M0 8L5 2.500L10 8z" /></div>
          <div className="h-[69px] border-b border-[#b9b9b9] bg-linear-to-r from-[#f3f3f3] to-white" />
          <div className="mt-auto flex h-[19px] items-center justify-center border-t border-[#b9b9b9] bg-[#fafafa]"><Tri d="M0 2L5 7.500L10 2z" /></div>
        </div>
      </div>
      <div className="flex h-[7px] shrink-0 items-center justify-center pl-1"><div className="w-[22px] border-t-2 border-dotted border-[#c4c4c4]" /></div>
      <DockTitle title="Layers" className="w-[43px]" />
      <div className="flex h-9 shrink-0 items-center gap-[13.300px] pb-1.5 pl-[11px]">
        <Mini><path d="M11 9L19 2" stroke="#b57b1c" strokeWidth="3.200" strokeLinecap="round" /><path d="M4 8l8-2 4 6-5 6z" fill="#f4b942" stroke="#b57b1c" strokeWidth=".7" /><path d="M1 10l5-2 3 6-4 2z" fill="#e5484d" /><path d="M6 15l5-3 1 5z" fill="#5a8fe0" /></Mini>
        <Mini><g fill="#e6e6e6" stroke="#777"><path d="M1 8h10v11H1zM4 5h10v11H4zM7 3h10v11H7z" /></g><path d="M10 11V3c0-3 4-3 4 0v8" stroke={BD} fill="none" strokeWidth="1.300" /><Plus x={11} y={11} s={0.75} /></Mini>
        <Mini><path d="M0 11C5 3 15 3 20 11C15 16 5 16 0 11Z" fill="#fff" stroke="#777" strokeWidth="1.200" /><circle cx="10" cy="10" r="4.300" fill="#4d7fb8" /><circle cx="10" cy="10" r="2" fill="#142638" /><path d="M1 6C6 1 14 1 19 7" fill="none" stroke="#999" /><path d="M15 17.500h6l-3 3z" fill="#333" /></Mini>
        <Mini>{Funnel}<path d="M15 17.500h6l-3 3z" fill="#333" /></Mini>
        <Mini className="opacity-35"><text x="0" y="11" fontSize="19" fontStyle="italic" fontFamily="Open Sans, sans-serif" fill="#444">ε</text><path d="M10 19v-8h8.500v8h-2.500v-5h-3v5z" fill="none" stroke="#555" strokeWidth="1.300" /></Mini>
        <div className="-ml-[7.500px] -mr-[6.500px]"><Drop dim /></div>
        <Mini>{Tree}{DownArrow}</Mini>
        <Mini>{Tree}{UpArrow}</Mini>
        <Mini className="-ml-px"><path d="M1.500 1h15v15h-15z" fill="#f6f6f6" stroke="#777" strokeWidth="1.300" /><rect x="12" y="13" width="8" height="6" rx="2.500" fill="#e5484d" /><path d="M13.500 16h5" stroke="#fff" strokeWidth="1.400" /></Mini>
      </div>
      <div className="flex grow flex-col overflow-hidden border border-t-2 border-[#b9b9b9] bg-white">
        <div className="grow">
          {layers.map((l, k) => (
            <div key={l.t} className="flex h-[23.500px] items-center pl-2.5">
              <Expander hidden={k < 6} />
              <div className="ml-[15px] flex size-[18px] shrink-0 items-center justify-center border-2 border-[#c3c3c3] bg-white">
                {l.on && <svg viewBox="0 0 12 12" className="size-3 overflow-visible"><path d="M1 6l3 5L10.500 0" fill="none" stroke="#111" strokeWidth="2" /></svg>}
              </div>
              {l.c ? (
                <div className={"ml-2 size-[21px] shrink-0 border border-[#333] " + l.c} />
              ) : (
                <svg viewBox="0 0 4 4" className="ml-2.5 mr-px size-[18px] shrink-0" shapeRendering="crispEdges">
                  {rasterCells.map((c, n) => <rect key={n} x={n % 4} y={Math.floor(n / 4)} width="1" height="1" fill={c} />)}
                </svg>
              )}
              <Fit className={(l.on ? "text-black " : "text-[#7c7c7c] italic ") + "ml-2 text-[15px] font-bold " + l.w}>{l.t}</Fit>
            </div>
          ))}
        </div>
        <div className="flex h-[18px] shrink-0 bg-[#e2e2e2]">
          <div className="flex w-[18px] items-center justify-center border-r border-[#b9b9b9] bg-[#fafafa] pr-0.5"><Tri d="M8 0L2.500 5L8 10z" /></div>
          <div className="w-[388px] border-r-2 border-[#b9b9b9] bg-linear-to-b from-white to-[#f0f0f0]" />
          <div className="ml-auto flex w-[19px] items-center justify-center border-l border-[#b9b9b9] bg-[#fafafa]"><Tri d="M2 0L7.500 5L2 10z" /></div>
        </div>
      </div>
    </div>
  );
}

/* ---------- map ---------- */
const outline =
  "930,232 961,232 963,240 969,244 969,255 982,261 984,267 991,268 993,278 996,288 996,306 1002,311 1005,309 1008,313 1009,325 1013,335 1011,342 1015,354 1009,363 1009,373 1012,391 1008,397 1010,413 1015,423 1016,434 1023,438 1028,452 1035,458 1045,469 1055,473 1062,480 1057,485 1030,486 1025,489 1017,483 1010,482 997,486 989,489 984,483 970,483 962,479 955,483 952,478 942,477 941,493 929,509 938,519 947,528 955,533 953,539 963,543 964,551 978,562 981,572 995,571 1003,579 1013,583 1020,587 1023,596 1036,607 1047,611 1053,617 1045,624 1039,639 1051,652 1050,668 1040,680 1023,694 1021,708 1015,720 1008,736 1000,736 995,753 993,772 982,778 970,782 957,792 963,803 973,801 974,817 971,828 973,837 966,853 977,857 979,875 982,903 988,913 1005,922 1011,930 1012,947 1018,950 1011,953 1023,977 1043,997 1055,1009 1067,1024 1073,1026 1082,1033 1087,1035 1091,1046 1089,1052 1091,1077 1096,1085 1099,1097 1092,1099 1089,1114 1095,1128 1095,1138 1087,1141 1085,1133 1075,1131 1065,1121 1045,1117 1032,1120 1020,1111 1007,1115 995,1112 993,1108 984,1108 972,1099 961,1105 957,1100 866,1100 866,1093 856,1092 840,1095 822,1095 810,1093 793,1092 770,1091 743,1092 737,1089 713,1091 712,1100 618,1100 603,1101 590,1094 588,1083 589,1063 595,1037 599,1032 599,1020 593,1009 583,997 573,990 573,982 567,971 572,965 577,966 575,960 569,958 574,952 576,950 570,955 566,955 562,961 556,964 543,958 533,954 521,947 520,937 515,928 512,915 508,910 499,916 483,914 484,893 492,888 492,882 505,865 508,840 516,828 510,820 512,813 510,808 527,795 543,779 550,768 557,769 559,759 568,758 570,754 579,753 583,742 585,732 593,733 603,721 615,714 618,722 629,727 645,722 648,704 651,712 657,713 670,722 669,730 677,739 688,739 691,753 716,753 717,747 726,743 728,725 733,715 745,711 752,703 747,697 752,690 758,680 763,672 763,655 768,645 775,644 781,635 780,625 783,603 795,597 797,587 805,584 817,583 820,575 825,570 827,557 835,549 836,530 831,527 838,523 848,515 860,512 863,500 865,490 863,487 863,477 868,468 878,467 883,450 886,438 888,422 895,412 900,399 907,397 918,380 921,373 931,373 936,378 947,372 957,364 973,357 976,350 972,342 967,339 972,334 973,325 975,313 977,304 972,302 963,290 947,290 938,287 937,267 932,242";

function rng(seed: number) {
  let s = seed;
  return () => {
    s = (s * 1664525 + 1013904223) % 4294967296;
    return s / 4294967296;
  };
}
/* subdivide the coastline and roughen it by about a pixel */
function roughen(src: string) {
  const pts = src.split(" ").map((p) => p.split(",").map(Number));
  const r = rng(7);
  const out: string[] = [];
  pts.forEach((p, i) => {
    const q = pts[(i + 1) % pts.length];
    const len = Math.hypot(q[0] - p[0], q[1] - p[1]);
    const straight = len > 60 || (p[1] === 232 && q[1] === 232);
    const n = straight ? 1 : Math.max(1, Math.round(len / 3));
    for (let k = 0; k < n; k++) {
      const t = k / n;
      const j = k === 0 ? 0 : 2;
      out.push(
        Math.round(p[0] + (q[0] - p[0]) * t + (r() - 0.5) * j) + "," + Math.round(p[1] + (q[1] - p[1]) * t + (r() - 0.5) * j),
      );
    }
  });
  return out.join(" ");
}
const coast = roughen(outline);

/* x, y, radius-x, radius-y, count, brightness */
const clusters = [
  [950, 260, 22, 22, 55, 0.4], [985, 290, 12, 15, 30, 0.25], [940, 415, 50, 45, 260, 0.2], [990, 440, 40, 40, 130, 0.17], [910, 460, 40, 40, 170, 0.19],
  [880, 540, 50, 45, 110, 0.22], [949, 429, 5, 1.5, 16, 0.8], [874, 530, 3, 3, 10, 0.6], [889, 690, 2, 4, 12, 0.6], [1020, 630, 22, 30, 40, 0.35],
  [725, 965, 7, 8, 70, 0.6], [725, 965, 4, 5, 40, 0.9], [726, 960, 13, 14, 24, 0.3], [582, 951, 6, 6, 40, 0.7], [545, 942, 14, 10, 34, 0.35],
  [898, 909, 4, 1.500, 12, 0.7], [625, 835, 55, 40, 160, 0.14], [635, 842, 9, 14, 50, 0.18], [650, 780, 60, 40, 90, 0.12], [960, 930, 50, 30, 40, 0.16],
  [830, 950, 60, 35, 80, 0.12], [570, 900, 45, 30, 40, 0.18], [880, 720, 120, 60, 90, 0.12], [760, 900, 100, 80, 90, 0.11], [900, 1000, 150, 60, 50, 0.1],
];
const towns = [
  [947, 248, 0.5], [945, 255, 0.6], [949, 263, 0.5], [960, 272, 0.7], [960, 246, 0.5], [924, 385, 0.7], [934, 394, 0.8], [908, 419, 0.6], [913, 408, 0.4],
  [972, 419, 0.6], [990, 407, 0.6], [999, 410, 0.8], [1008, 410, 0.7], [1022, 450, 0.95], [991, 445, 0.6], [959, 468, 0.8], [1002, 468, 0.5], [919, 482, 0.95],
  [884, 554, 0.6], [922, 556, 0.5], [888, 594, 0.7], [952, 597, 0.5], [1032, 654, 0.9], [1039, 672, 1], [815, 686, 0.6], [844, 685, 0.4], [816, 715, 0.6],
  [747, 736, 0.8], [812, 758, 0.7], [865, 758, 0.6], [947, 754, 1], [941, 762, 0.6], [990, 720, 0.4], [827, 771, 0.5], [674, 817, 0.5], [701, 798, 0.5],
  [615, 798, 0.4], [653, 834, 0.4], [599, 866, 0.5], [580, 897, 0.8], [557, 904, 0.5], [700, 895, 0.6], [733, 919, 0.5], [755, 919, 0.7], [772, 914, 0.9],
  [792, 902, 0.5], [866, 881, 1], [889, 855, 0.5], [967, 804, 0.8], [930, 828, 0.7], [933, 834, 0.5], [967, 883, 0.7], [967, 905, 0.7], [952, 920, 0.9],
  [990, 929, 0.6], [996, 932, 0.6], [857, 956, 0.6], [944, 957, 0.5], [783, 972, 0.7], [612, 971, 0.5], [723, 993, 0.5], [694, 1040, 0.6], [761, 1039, 0.6],
  [893, 1021, 0.4], [967, 1001, 0.4], [1007, 993, 0.7], [1028, 1008, 0.4], [665, 983, 0.3], [704, 1083, 0.4], [725, 941, 0.6], [804, 962, 0.5],
];
/* faint trails of villages along the main roads */
const roads = [
  "841,550 860,556 880,560 886,575 888,594 895,610 890,635 888,665 889,690", "840,598 885,597 950,606 990,615 1015,625 1030,640",
  "905,678 940,666 975,660 1000,650 1035,654", "585,900 567,920 556,945", "725,950 735,918 770,915 800,900", "898,909 870,908 840,905",
  "898,909 950,918 985,922 1005,935", "930,725 950,755 957,785", "870,860 868,800 865,760 895,770 920,755", "958,1001 1007,993 1043,997",
  "1012,960 1007,993 990,1030", "900,912 880,930 862,945", "835,940 855,955", "615,800 620,835 600,870 580,897", "620,835 655,865 670,885",
];

function MapView() {
  const r = rng(42);
  const dots: React.ReactNode[] = [];
  clusters.forEach((c, a) => {
    for (let k = 0; k < c[4]; k++) {
      const t = r() * 6.283;
      const d = Math.pow(r(), 0.7);
      dots.push(
        <rect key={a + "-" + k} x={Math.round(c[0] + Math.cos(t) * d * c[2])} y={Math.round(c[1] + Math.sin(t) * d * c[3])} width="1" height="1" fill="#fff" opacity={c[5] * (0.4 + 0.6 * r())} />,
      );
    }
  });
  return (
    <svg viewBox="459 212 663 952" className="h-[952px] w-[663px] shrink-0 bg-white" shapeRendering="crispEdges">
      <defs>
        <clipPath id="land"><polygon points={coast} /></clipPath>
        <radialGradient id="city"><stop offset="0" stopColor="#fff" stopOpacity=".6" /><stop offset="1" stopColor="#fff" stopOpacity="0" /></radialGradient>
      </defs>
      <polygon points={coast} fill="#000" />
      <path d="M569 956L577 949" stroke="#fff" />
      <g clipPath="url(#land)">
        {roads.map((p) => <polyline key={p} points={p} fill="none" stroke="#1d1d1d" strokeWidth="1" strokeDasharray="1 3" />)}
        <circle cx="725" cy="965" r="8" fill="url(#city)" />
        <circle cx="582" cy="951" r="6" fill="url(#city)" opacity=".7" />
        {dots}
        {towns.map((t, k) => <rect key={k} x={t[0] - 0.5} y={t[1] - 0.5} width="1.500" height="1.500" fill="#fff" opacity={t[2] * 0.8} shapeRendering="auto" />)}
      </g>
    </svg>
  );
}

/* ---------- taskbar ---------- */
function QgisLogo({ className, task }: { className: string; task?: boolean }) {
  return (
    <svg viewBox="0 0 32 32" className={className}>
      <circle cx="15" cy="15" r="11" fill="none" stroke={task ? "#85a92c" : "#62a537"} strokeWidth="6" />
      <path d="M15 17l5-4 11 13v4h-5z" fill="#5ba02e" stroke={task ? "#c9dc9a" : "#fff"} strokeWidth="1" />
      <path d="M11.500 10.500l7 1 3 4-4.500 4.500-4-3z" fill="#f0883a" />
    </svg>
  );
}
const taskIcons: { n: string; open?: boolean; active?: boolean; icon: React.ReactNode }[] = [
  { n: "explorer", open: true, icon: <g><path d="M1.500 3h10l2 2.500h16V28h-28z" fill="#f7c64a" /><path d="M1.500 3h10l2 2.500-2 2h-10z" fill="#e69b1c" /><path d="M2 8h28v17H2z" fill="#ffd566" /><path d="M7 29V19q0-2 2-2h14q2 0 2 2v10h-5v-6h-8v6z" fill="#3f98dd" /></g> },
  { n: "outlook", open: true, icon: <g><path d="M5 11L17 1l14 10v16q0 3-3 3H8q-3 0-3-3z" fill="#1266c0" /><path d="M10 8h16v12H10z" fill="#1c86dc" /><path d="M5 29L31 11v17q0 2-2 2z" fill="#38c1f2" /><path d="M17 1l14 10-13 9-8-12z" fill="#2380d8" opacity=".8" /><rect x="0" y="8" width="17" height="16" rx="2" fill="#0f62b8" /><text x="8.500" y="21" textAnchor="middle" fontSize="14" fontWeight="bold" fontFamily="Open Sans, sans-serif" fill="#fff">O</text></g> },
  { n: "edge", open: true, icon: <g><path d="M1 15C2 5 9-1 17 0C26 0 32 7 31 14C30 21 20 22 19 18C22 15 20 10 14 10C8 10 6 16 6 20Z" fill="#36c3c8" /><path d="M20 1C30 4 33 14 29 18C26 22 19 21 19 18C23 13 18 9 12 10C12 5 16 2 20 1Z" fill="#5bdc72" opacity=".75" /><path d="M1 14C3 9 9 8 13 10C6 16 12 28 27 24C20 33 1 32 1 14Z" fill="#1374c4" /><path d="M0 21h16v10H0z" fill="#d57a12" /><path d="M0 21h16v4H0z" fill="#9a4d08" /><path d="M5 21v-2h6v2" fill="none" stroke="#9a4d08" strokeWidth="1.500" /><path d="M7 24h2v3H7z" fill="#ffd24a" /></g> },
  { n: "notes", icon: <g><path d="M2 2h28v28H2z" fill="#fbd80a" /><path d="M16 30L19 18L30 16z" fill="#3b3b36" /><path d="M16 30L30 16V30z" fill="#e9b600" /></g> },
  { n: "teams", open: true, icon: <g><circle cx="17" cy="5" r="4.500" fill="#7b83eb" /><circle cx="27" cy="7" r="3" fill="#5059c9" /><path d="M9 11h16v12q-2 6-8 6-8-1-8-8z" fill="#7b83eb" /><path d="M24 11h8v10q-2 4-7 3z" fill="#5059c9" /><rect x="0" y="8" width="15" height="15" rx="1.500" fill="#4b53bc" /><text x="7.500" y="20" textAnchor="middle" fontSize="13" fontWeight="bold" fontFamily="Open Sans, sans-serif" fill="#fff">T</text><circle cx="23.500" cy="23" r="10.500" fill="#c4261d" /><text x="23.500" y="28.500" textAnchor="middle" fontSize="15" fontFamily="Open Sans, sans-serif" fill="#fff">1</text></g> },
  { n: "doc", open: true, icon: <g><path d="M5 1.500h17l5.500 5.500v23H5z" fill="#f6f6f6" stroke="#d0d0d0" strokeWidth=".8" /><path d="M22 1.500l5.500 5.500H22z" fill="#b8b8b8" /></g> },
  { n: "powerpoint", open: true, icon: <g><circle cx="17" cy="15.500" r="14.500" fill="#d35230" /><path d="M17 1a14.500 14.500 0 0 1 14.500 14.500H17z" fill="#ff8f6b" /><path d="M17 1v14.500H2.500A14.500 14.500 0 0 1 17 1z" fill="#ed6c47" /><rect x="0" y="7" width="16" height="16" rx="1.500" fill="#b7391d" /><text x="8" y="20" textAnchor="middle" fontSize="13.500" fontWeight="bold" fontFamily="Open Sans, sans-serif" fill="#fff">P</text></g> },
  { n: "qgis", active: true, icon: null },
  { n: "word", open: true, icon: <g><path d="M7 2h24v7H7z" fill="#41a5ee" /><path d="M7 9h24v7H7z" fill="#2b7cd3" /><path d="M7 16h24v7H7z" fill="#185abd" /><path d="M7 23h24v6H7z" fill="#103f91" /><rect x="0" y="7" width="16" height="16" rx="1.500" fill="#1b5dbe" /><text x="8" y="19.500" textAnchor="middle" fontSize="12.500" fontWeight="bold" fontFamily="Open Sans, sans-serif" fill="#fff">W</text></g> },
];

function Taskbar() {
  return (
    <div className="flex h-[52px] w-full shrink-0 overflow-hidden bg-[#20353f]">
      <div className="flex w-[63.500px] shrink-0 items-center justify-center">
        <svg viewBox="0 0 22 22" className="size-[22px]" fill="#fff"><path d="M0 3l9-1.300v8.700H0zM10 1.500L22 0v10.400H10zM0 11.500h9v8.800L0 19zM10 11.500h12V22l-12-1.700z" /></svg>
      </div>
      <div className="flex w-[379.500px] shrink-0 items-center border-y border-[#c6c6c6] bg-[#f2f2f2] pl-[15px]">
        <svg viewBox="0 0 22 22" className="size-[22px] shrink-0" fill="none" stroke="#222" strokeWidth="1.700"><circle cx="14" cy="8" r="7" /><path d="M9 13L.500 21.500" /></svg>
        <Fit className="ml-[15px] w-[173px] text-[19px] text-[#333]">Type here to search</Fit>
        <svg viewBox="0 0 104 50" className="-mr-px ml-auto h-[50px] w-[104px] shrink-0">
          <path d="M0 46L24 33H88L104 44V46z" fill="#dfbd8e" /><path d="M0 46h104v4H0z" fill="#c59a68" />
          <path d="M15 22l6 23 31-8-5-22z" fill="#2e9a52" /><path d="M17 20l14-3 5 21-14 4z" fill="#f5f1fb" stroke="#b9a7d8" strokeWidth=".7" /><path d="M31 17l13-5 6 22-14 5z" fill="#fff" stroke="#b9a7d8" strokeWidth=".7" />
          <path d="M21 24l8-2M22 28l8-2M23 32l8-2M34 21l8-2M35 25l8-2M36 29l8-2" stroke="#999" /><path d="M41 25L50 12" stroke="#f6a623" strokeWidth="5" /><path d="M49 13l2.500-3.500" stroke="#ef5b4c" strokeWidth="6" /><path d="M38.500 28l1-5 3.500 3z" fill="#f3d2a0" />
          <path d="M72 9q0-6 5-6t5 6" fill="none" stroke="#1a6fe0" strokeWidth="2.500" />
          <path d="M64 22Q64 6 77 6T90 22V38Q90 44 84 44H70Q64 44 64 38z" fill="#0f8cf5" /><path d="M66 15q4-8 11-8t11 8" stroke="#9fd0ff" fill="none" strokeWidth="1.500" />
          <path d="M66 34Q67 26 77 26T89 34V38Q88 42 84 42H70Q66 42 66 38z" fill="#0a55d9" /><path d="M67 38h20" stroke="#b97ff0" strokeWidth="2.500" />
        </svg>
      </div>
      <div className="flex w-[67px] shrink-0 items-center justify-center">
        <svg viewBox="0 0 24 22" className="-mt-1 h-[21px] w-[23px]" fill="none" stroke="#fff" strokeWidth="1.500"><path d="M1.500 1v2.500h13V1M1.500 21v-2.500h13V21M1.500 6h13v10h-13zM20.500 1v7M20.500 13v8" /><path d="M19 9h3.500v3H19z" fill="#fff" stroke="none" /></svg>
      </div>
      {taskIcons.map((t) => (
        <div key={t.n} className={"flex w-[65.500px] shrink-0 flex-col items-center justify-end " + (t.active ? "bg-[#4c5d66]" : "")}>
          {t.active ? <QgisLogo task className="mb-1.5 size-8" /> : <svg viewBox="0 0 32 32" className="mb-2 size-[31px] overflow-visible">{t.icon}</svg>}
          <div className={"h-[3px] " + (t.active ? "w-full bg-[#76b9ed]" : t.open ? "w-[54px] bg-[#76b9ed]" : "w-0")} />
        </div>
      ))}
    </div>
  );
}

const menus: [string, number, string][] = [
  ["Project", 3, "w-[49px]"], ["Edit", 0, "w-[27px]"], ["View", 0, "w-[34px]"], ["Layer", 0, "w-[37px]"], ["Settings", 0, "w-[56px]"], ["Plugins", 0, "w-[50px]"],
  ["Vector", 4, "w-[45px]"], ["Raster", 0, "w-[44px]"], ["Database", 0, "w-[65px]"], ["Web", 0, "w-[33px]"], ["Mesh", 0, "w-[38px]"], ["Processing", 3, "w-[74px]"], ["Help", 0, "w-[33px]"],
];

export default function App() {
  return (
    <div className="h-[1254px] w-[1980px] overflow-hidden bg-white font-['Open_Sans',sans-serif] text-[#1a1a1a]">
      <div className="flex h-full w-[1122px] flex-col overflow-hidden bg-[#f0f0f0]">
        <div className="flex h-[30px] shrink-0 items-center bg-white pl-0.5 pt-px">
          <QgisLogo className="size-[21px]" />
          <Fit className="ml-[5px] w-[174px] pt-px text-[15.500px]">*Untitled Project — QGIS</Fit>
        </div>
        <div className="flex h-[27px] shrink-0 items-center gap-[19px] border-b border-[#c6c6c6] pl-[13px] pt-0.5 text-[15.500px]">
          {menus.map(([m, k, w]) => (
            <Fit key={m} className={w}>{m.slice(0, k)}<span className="underline decoration-1 underline-offset-2">{m[k]}</span>{m.slice(k + 1)}</Fit>
          ))}
        </div>
        <Toolbars />
        <div className="flex h-[955px] shrink-0 border-b border-[#b9b9b9]">
          <LeftDock />
          <div className="flex w-[9px] shrink-0 items-center justify-center"><div className="h-[22px] border-l-2 border-dotted border-[#c4c4c4]" /></div>
          <div className="flex flex-col pt-[2px]"><MapView /></div>
        </div>
        <div className="flex grow items-center border-b border-[#c6c6c6] pl-[5px] pt-0.5">
          <div className="flex h-[29px] w-[265px] shrink-0 items-center rounded border-2 border-[#bdbdbd] bg-white pl-2.5">
            <svg viewBox="0 0 16 16" className="size-4" fill="none" stroke="#8a8a8a" strokeWidth="1.500"><circle cx="6.500" cy="6.500" r="5.500" /><path d="M10.500 10.500l5 5" /></svg>
            <Fit className="ml-[11px] w-[121px] pt-px text-[12.500px] text-[#7a7a7a]">Type to locate (Ctrl+K)</Fit>
          </div>
          <Fit className="ml-auto w-[69px] text-[15px]">Coordinate</Fit>
          <div className="ml-[5px] h-[29px] w-[31px] shrink-0 overflow-hidden rounded-l border-2 border-r-0 border-[#bdbdbd] bg-white pl-1.5 text-[15px] leading-6">
            <Fit className="w-[36px]">10.75</Fit>
          </div>
        </div>
        <Taskbar />
      </div>
    </div>
  );
}
